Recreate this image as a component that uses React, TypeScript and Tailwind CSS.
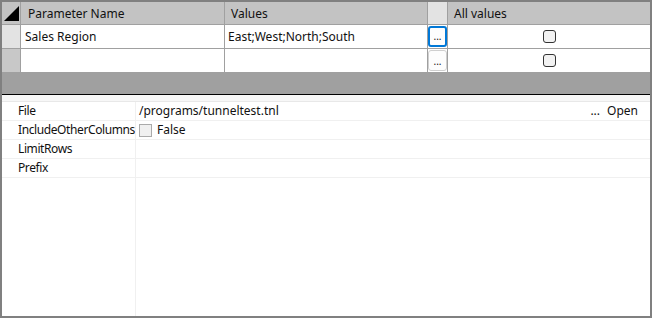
function Check({ className = '' }: { className?: string }) {
  return <span className={`inline-block w-[13px] h-[13px] rounded-[3px] border border-[#333] bg-[#f2f2f2] ${className}`} />;
}

function DotsButton({ focused }: { focused?: boolean }) {
  return (
    <div
      className={`w-[19px] h-[21px] rounded-[3px] bg-[#fdfdfd] flex items-end justify-center pb-[4px] text-[10px] leading-none ${
        focused ? 'border-2 border-[#0078d7]' : 'border border-[#cfcfcf]'
      }`}
    >
      ...
    </div>
  );
}

const rows = [
  { name: 'Sales Region', values: 'East;West;North;South', focused: true },
  { name: '', values: '', focused: false },
];

const props = [
  { label: 'File', kind: 'file' },
  { label: 'IncludeOtherColumns', kind: 'bool' },
  { label: 'LimitRows', kind: 'text' },
  { label: 'Prefix', kind: 'text' },
];

export default function App() {
  return (
    <div
      className="w-[652px] h-[318px] border-2 border-[#808080] bg-white flex flex-col text-[12px] text-[#111] overflow-hidden"
      style={{ fontFamily: '"Segoe UI", "Noto Sans", sans-serif' }}
    >
      {/* parameter grid */}
      <div className="flex h-[23px] bg-[#c3c3c3] border-b border-[#a0a0a0]">
        <div className="w-[19px] border-r border-[#a0a0a0] relative">
          <svg className="absolute left-[2px] top-[3px]" width="16" height="17" viewBox="0 0 16 17">
            <polygon points="15,1 15,16 0,16" fill="#000" />
          </svg>
        </div>
        <div className="w-[204px] border-r border-[#a0a0a0] pl-[7px] pt-[1px] flex items-center">Parameter Name</div>
        <div className="w-[203px] border-r border-[#a0a0a0] pl-[6px] pt-[1px] flex items-center">Values</div>
        <div className="w-[20px] border-r border-[#a0a0a0] bg-[#e3e3e3]" />
        <div className="flex-1 pl-[6px] pt-[1px] flex items-center">All values</div>
      </div>
      {rows.map((r, i) => (
        <div key={i} className="flex h-[24px] border-b border-[#a0a0a0]">
          <div className={`w-[19px] border-r border-[#a0a0a0] ${i === 0 ? 'bg-[#e3e3e3]' : 'bg-[#c8c8c8]'}`} />
          <div className="w-[204px] border-r border-[#a0a0a0] pl-[4px] pt-[1px] flex items-center">{r.name}</div>
          <div className="w-[203px] border-r border-[#a0a0a0] pl-[3px] pt-[1px] flex items-center">{r.values}</div>
          <div className="w-[20px] border-r border-[#a0a0a0] flex items-center justify-center">
            <DotsButton focused={r.focused} />
          </div>
          <div className="flex-1 flex items-center justify-center">
            <Check />
          </div>
        </div>
      ))}
      <div className="h-[21px] bg-[#a0a0a0]" />
      <div className="h-[1px] bg-black" />
      <div className="h-[7px] bg-[#f7f7f7] border-b border-[#e8e8e8]" />

      {/* property grid */}
      <div className="flex-1 flex flex-col">
        {props.map((p) => (
          <div key={p.label} className="flex h-[19px] border-b border-[#f0f0f0]">
            <div className="w-[134px] border-r border-[#f0f0f0] pl-[16px] flex items-center whitespace-nowrap overflow-hidden tracking-[-0.4px]">
              {p.label}
            </div>
            <div className="flex-1 pl-[3px] pr-[12px] flex items-center">
              {p.kind === 'file' && (
                <>
                  <span className="flex-1">/programs/tunneltest.tnl</span>
                  <span className="mr-[7px]">...</span>
                  <span>Open</span>
                </>
              )}
              {p.kind === 'bool' && (
                <>
                  <span className="w-[13px] h-[13px] border border-[#aaa] bg-[#f0f0f0] mr-[5px]" />
                  <span>False</span>
                </>
              )}
            </div>
          </div>
        ))}
        <div className="flex-1 flex">
          <div className="w-[134px] border-r border-[#f0f0f0]" />
        </div>
      </div>
    </div>
  );
}
